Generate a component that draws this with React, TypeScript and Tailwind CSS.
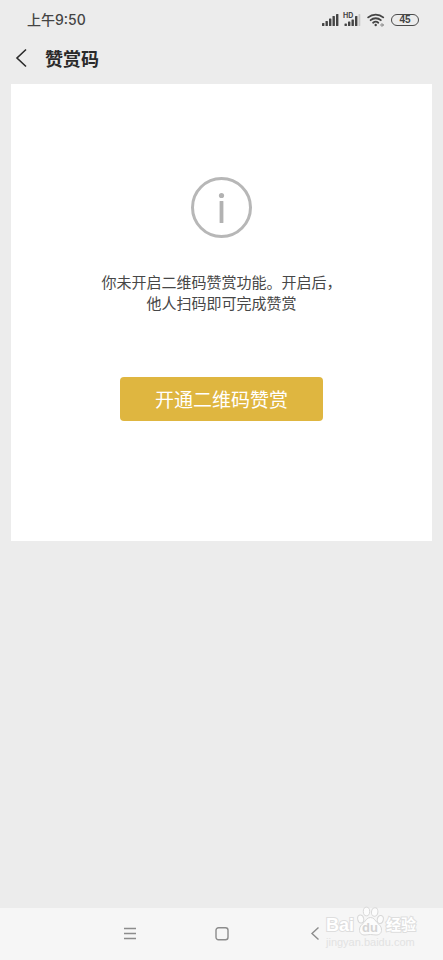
import React from 'react';

const SignalIcon: React.FC = () => (
  <svg width="17" height="14" viewBox="0 0 17 14" fill="#444444" aria-hidden="true">
    <rect x="0" y="10" width="2.4" height="3" rx="0.6" />
    <rect x="3.5" y="8" width="2.4" height="5" rx="0.6" />
    <rect x="7" y="5.5" width="2.4" height="7.5" rx="0.6" />
    <rect x="10.5" y="3" width="2.4" height="10" rx="0.6" />
    <rect x="14" y="1" width="2.4" height="12" rx="0.6" />
  </svg>
);

const SignalHdIcon: React.FC = () => (
  <span className="relative block">
    <svg width="17" height="14" viewBox="0 0 17 14" fill="#444444" aria-hidden="true">
      <rect x="0.5" y="10.5" width="2.4" height="2.5" rx="0.6" />
      <rect x="4" y="8.5" width="2.4" height="4.5" rx="0.6" />
      <rect x="7.500" y="6.5" width="2.4" height="6.5" rx="0.6" />
      <rect x="11" y="3" width="2.4" height="10" rx="0.6" />
      <rect x="14.500" y="1" width="1.8" height="12" rx="0.6" fill="#c8c8c8" />
    </svg>
    <span className="absolute -left-px -top-px text-[7px] leading-[7px] font-bold">HD</span>
  </span>
);

const WifiIcon: React.FC = () => (
  <svg width="18" height="14" viewBox="0 0 18 14" fill="none" stroke="#444444" strokeWidth="1.8" strokeLinecap="round" aria-hidden="true">
    <path d="M1.2 4.4C5.4 0.6 12 0.6 16.2 4.4" />
    <path d="M3.6 7.2C6.5 4.6 10.9 4.6 13.8 7.2" />
    <path d="M6.1 9.7C7.6 8.4 9.8 8.4 11.3 9.7" />
    <circle cx="8.7" cy="12" r="1.2" fill="#444444" stroke="none" />
    <circle cx="15" cy="12" r="1.2" strokeWidth="0.8" stroke="#777777" />
  </svg>
);

const StatusBar: React.FC = () => (
  <div className="flex items-center justify-between h-10 pl-[27px] pr-6 text-[#444444]">
    <span className="text-sm font-medium">上午9:50</span>
    <div className="flex items-center">
      <SignalIcon />
      <div className="ml-[5px]">
        <SignalHdIcon />
      </div>
      <div className="ml-[6px]">
        <WifiIcon />
      </div>
      <span className="ml-[6px] w-7 h-3 rounded-full border border-[#4a4a4a] font-['Liberation_Sans'] text-[10px] leading-[10px] font-bold text-center">45</span>
    </div>
  </div>
);

const InfoIcon: React.FC = () => (
  <svg width="62" height="62" viewBox="0 0 62 62" aria-hidden="true">
    <circle cx="30.500" cy="30.500" r="29" fill="none" stroke="#b7b7b7" strokeWidth="3" />
    <circle cx="30.500" cy="18.500" r="2.600" fill="#b2b2b2" />
    <rect x="28.600" y="24" width="3.800" height="22" rx="0.5" fill="#b2b2b2" />
  </svg>
);

const Watermark: React.FC = () => (
  <div className="absolute right-[27px] bottom-3 w-[90px] select-none text-white">
    <div className="flex items-end justify-between h-[30px]">
      <span className="font-['Liberation_Sans'] text-lg leading-[22px] font-bold [-webkit-text-stroke:2px_#dedede] [paint-order:stroke]">Bai</span>
      <span className="relative block">
        <svg width="27" height="30" viewBox="0 0 27 30" fill="#fcfcfc" stroke="#d8d8d8" strokeWidth="1" aria-hidden="true">
          <ellipse cx="3.700" cy="13" rx="3" ry="4" transform="rotate(-12 3.700 13)" />
          <ellipse cx="9.500" cy="5.500" rx="3.200" ry="4.300" />
          <ellipse cx="17.700" cy="6" rx="3.200" ry="4.300" transform="rotate(10 17.700 6)" />
          <ellipse cx="23.300" cy="13.500" rx="3" ry="4" transform="rotate(12 23.300 13.500)" />
          <path d="M13.500 11.500C17 11.500 18.200 14.500 20 16.500C22.500 19 24.800 20.500 24.500 24.500C24.200 28 21.500 29 19 29C17 29 15.500 28.500 13.500 28.500C11.500 28.500 10 29 8 29C5.500 29 2.800 28 2.500 24.500C2.200 20.500 4.500 19 7 16.500C8.800 14.500 10 11.500 13.500 11.500Z" />
        </svg>
        <span className="absolute inset-x-0 bottom-0 text-center font-['Liberation_Sans'] text-[13px] leading-4 font-bold text-[#d4d4d4]">du</span>
      </span>
      <span className="text-[15px] leading-[22px] font-bold [-webkit-text-stroke:2px_#dedede] [paint-order:stroke]">经验</span>
    </div>
    <div className="font-['Liberation_Sans'] text-[11px] leading-3 whitespace-nowrap text-[#e2e2e2]">jingyan.baidu.com</div>
  </div>
);

const NavBar: React.FC = () => (
  <nav className="relative mt-auto flex items-center justify-center gap-[68px] h-[52px] bg-[#f6f6f6]">
    <button type="button" aria-label="菜单" className="w-6 h-6 flex items-center justify-center">
      <svg width="14" height="14" viewBox="0 0 14 14" fill="none" stroke="#8c8c8c" strokeWidth="1.3">
        <path d="M1 1.500h12M1 6.500h12M1 11.500h12" />
      </svg>
    </button>
    <button type="button" aria-label="主页" className="w-6 h-6 flex items-center justify-center">
      <svg width="14" height="14" viewBox="0 0 14 14" fill="none" stroke="#8c8c8c" strokeWidth="1.4">
        <rect x="1" y="0.800" width="12" height="12" rx="2.5" />
      </svg>
    </button>
    <button type="button" aria-label="后退" className="w-6 h-6 flex items-center justify-center">
      <svg width="14" height="14" viewBox="0 0 14 14" fill="none" stroke="#8c8c8c" strokeWidth="1.4">
        <path d="M11.500 0.500L5 6.500l6.500 6" />
      </svg>
    </button>
    <Watermark />
  </nav>
);

const App: React.FC = () => {
  return (
    <div className="min-h-screen flex flex-col bg-[#ececec] font-[Inter,'Noto_Sans_CJK_SC',sans-serif]">
      <StatusBar />

      <header className="flex items-center h-9 pl-[11px]">
        <button type="button" aria-label="返回" className="w-[34px] h-9 flex items-center">
          <svg width="20" height="20" viewBox="0 0 20 20" fill="none" stroke="#2a2a2a" strokeWidth="1.6">
            <path d="M15 1.500L6 10l9 8.500" />
          </svg>
        </button>
        <h1 className="font-['Noto_Sans_CJK_SC',sans-serif] text-lg font-bold text-[#2a2a2a]">赞赏码</h1>
      </header>

      <main className="mx-[11px] mt-2 mb-8 pt-[93px] pb-[120px] flex flex-col items-center bg-white">
        <InfoIcon />
        <p className="mt-[33px] text-[15px] leading-[21px] text-center text-[#474747]">
          你未开启二维码赞赏功能。开启后，
          <br />
          他人扫码即可完成赞赏
        </p>
        <button type="button" className="mt-[63px] h-11 px-[35px] rounded bg-[#dfb640] font-['Noto_Sans_CJK_SC',sans-serif] text-[19px] text-white">
          开通二维码赞赏
        </button>
      </main>

      <NavBar />
    </div>
  );
};

export default App;
